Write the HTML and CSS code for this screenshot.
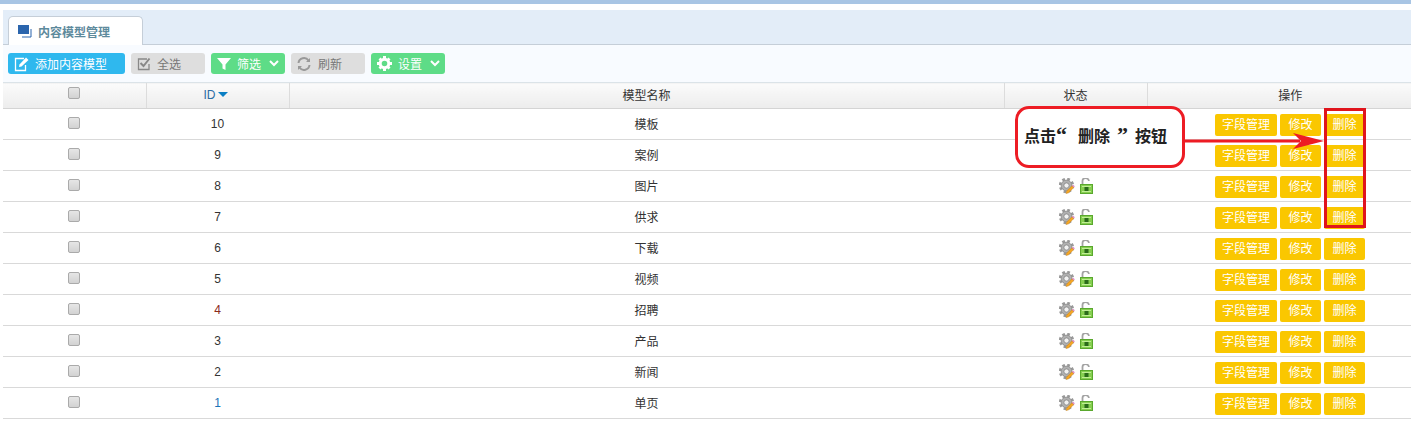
FILE: index.html
```html
<!DOCTYPE html>
<html lang="zh-CN">
<head>
    <meta charset="UTF-8">
    <title>内容模型管理</title>
    <link rel="stylesheet" href="styles.css">
</head>
<body>
    <svg class="defs" width="0" height="0">
        <symbol id="ico-status" viewBox="0 0 16 16">
            <circle cx="7.500" cy="7.500" r="6.500" fill="none" stroke="#999" stroke-width="2.400" stroke-dasharray="2.700 2.400"/>
            <circle cx="7.500" cy="7.500" r="5.400" fill="#b0b0b0" stroke="#7c7c7c" stroke-width=".7"/>
            <circle cx="7.500" cy="7.500" r="2.600" fill="#f1f1f1" stroke="#7c7c7c" stroke-width=".7"/>
            <path d="M7 15.500l.6-2.400L13 7.700l1.800 1.800-5.400 5.400z" fill="#f5a623" stroke="#b9740f" stroke-width=".4"/>
            <path d="M13 7.700l1-1 1.800 1.800-1 1z" fill="#e88fcb"/>
        </symbol>
        <symbol id="ico-lock" viewBox="0 0 13 16">
            <path d="M2.500 7V3.500a3.200 3.200 0 0 1 6.400-.5" fill="none" stroke="#a3a3a3" stroke-width="1.800"/>
            <rect x=".5" y="6.500" width="12" height="9" fill="#86cf50" stroke="#5aa82e"/>
            <rect x="2" y="8" width="9" height="1" fill="#c0ee95"/>
            <rect x="2" y="13" width="9" height="1" fill="#c0ee95"/>
            <rect x="4.500" y="9" width="4" height="4" fill="#2b6b1a"/>
        </symbol>
    </svg>

    <div class="topline"></div>

    <div class="page">
        <div class="tabbar">
            <div class="tab">
                <svg class="tab-icon" width="14" height="13" viewBox="0 0 14 13">
                    <rect x="0" y="0" width="11" height="9" fill="#2b65ad"/>
                    <path d="M13 4v8H4" fill="none" stroke="#2b65ad"/>
                </svg>
                内容模型管理
            </div>
        </div>

        <div class="toolbar">
            <a class="btn btn-blue btn-add">
                <svg width="16" height="16" viewBox="0 0 16 16" fill="none" stroke="#fff" stroke-width="1.300">
                    <path d="M10 2.500H1.500v12h10V9"/>
                    <path d="M5 11l.5-2.500L12 1.500l2.500 2.500-7 6.500z" fill="#fff" stroke="none"/>
                </svg>
                添加内容模型
            </a>
            <a class="btn btn-gray">
                <svg width="14" height="14" viewBox="0 0 14 14" fill="none" stroke="#888" stroke-width="1.300">
                    <path d="M10 2H1.500v10.500H12V7"/>
                    <path d="M3.500 6l3 3 6-7.500" stroke-width="2"/>
                </svg>
                全选
            </a>
            <a class="btn btn-green">
                <svg width="14" height="14" viewBox="0 0 14 14"><path d="M0 1h14L8.500 7.500V13l-3-1.500v-4z" fill="#fff"/></svg>
                筛选
                <svg class="caret" width="10" height="7" viewBox="0 0 10 7" fill="none" stroke="#fff" stroke-width="2"><path d="M1 1l4 4 4-4"/></svg>
            </a>
            <a class="btn btn-gray btn-refresh">
                <svg width="14" height="14" viewBox="0 0 14 14" fill="none" stroke="#999" stroke-width="2">
                    <path d="M1.500 6a5.500 5.500 0 0 1 10-2.500"/>
                    <path d="M12.500 8a5.500 5.500 0 0 1-10 2.500"/>
                    <path d="M13 1v4H9z" fill="#999" stroke="none"/>
                    <path d="M1 13V9h4z" fill="#999" stroke="none"/>
                </svg>
                刷新
            </a>
            <a class="btn btn-green">
                <svg width="15" height="15" viewBox="0 0 15 15">
                    <circle cx="7.500" cy="7.500" r="4.300" fill="none" stroke="#fff" stroke-width="3"/>
                    <path d="M6 0h3v3H6zM6 12h3v3H6zM0 6h3v3H0zM12 6h3v3h-3zM1.500 3.500l2-2 2 2-2 2zM9.500 11.500l2-2 2 2-2 2zM1.500 11.500l2-2 2 2-2 2zM9.500 3.500l2-2 2 2-2 2z" fill="#fff"/>
                </svg>
                设置
                <svg class="caret" width="10" height="7" viewBox="0 0 10 7" fill="none" stroke="#fff" stroke-width="2"><path d="M1 1l4 4 4-4"/></svg>
            </a>
        </div>

        <table class="grid">
            <colgroup>
                <col class="col-check"><col class="col-id"><col class="col-name"><col class="col-status"><col>
            </colgroup>
            <thead>
                <tr>
                    <th><span class="check"></span></th>
                    <th class="id-head">ID<i class="sort"></i></th>
                    <th>模型名称</th>
                    <th>状态</th>
                    <th class="ops-head">操作</th>
                </tr>
            </thead>
            <tbody>
                <tr><td><span class="check"></span></td><td class="id">10</td><td>模板</td><td class="status"><svg class="i-status"><use href="#ico-status"/></svg><svg class="i-lock"><use href="#ico-lock"/></svg></td><td class="ops"><a class="op">字段管理</a><a class="op">修改</a><a class="op">删除</a></td></tr>
                <tr><td><span class="check"></span></td><td class="id">9</td><td>案例</td><td class="status"><svg class="i-status"><use href="#ico-status"/></svg><svg class="i-lock"><use href="#ico-lock"/></svg></td><td class="ops"><a class="op">字段管理</a><a class="op">修改</a><a class="op">删除</a></td></tr>
                <tr><td><span class="check"></span></td><td class="id">8</td><td>图片</td><td class="status"><svg class="i-status"><use href="#ico-status"/></svg><svg class="i-lock"><use href="#ico-lock"/></svg></td><td class="ops"><a class="op">字段管理</a><a class="op">修改</a><a class="op">删除</a></td></tr>
                <tr><td><span class="check"></span></td><td class="id">7</td><td>供求</td><td class="status"><svg class="i-status"><use href="#ico-status"/></svg><svg class="i-lock"><use href="#ico-lock"/></svg></td><td class="ops"><a class="op">字段管理</a><a class="op">修改</a><a class="op">删除</a></td></tr>
                <tr><td><span class="check"></span></td><td class="id">6</td><td>下载</td><td class="status"><svg class="i-status"><use href="#ico-status"/></svg><svg class="i-lock"><use href="#ico-lock"/></svg></td><td class="ops"><a class="op">字段管理</a><a class="op">修改</a><a class="op">删除</a></td></tr>
                <tr><td><span class="check"></span></td><td class="id">5</td><td>视频</td><td class="status"><svg class="i-status"><use href="#ico-status"/></svg><svg class="i-lock"><use href="#ico-lock"/></svg></td><td class="ops"><a class="op">字段管理</a><a class="op">修改</a><a class="op">删除</a></td></tr>
                <tr><td><span class="check"></span></td><td class="id red">4</td><td>招聘</td><td class="status"><svg class="i-status"><use href="#ico-status"/></svg><svg class="i-lock"><use href="#ico-lock"/></svg></td><td class="ops"><a class="op">字段管理</a><a class="op">修改</a><a class="op">删除</a></td></tr>
                <tr><td><span class="check"></span></td><td class="id">3</td><td>产品</td><td class="status"><svg class="i-status"><use href="#ico-status"/></svg><svg class="i-lock"><use href="#ico-lock"/></svg></td><td class="ops"><a class="op">字段管理</a><a class="op">修改</a><a class="op">删除</a></td></tr>
                <tr><td><span class="check"></span></td><td class="id">2</td><td>新闻</td><td class="status"><svg class="i-status"><use href="#ico-status"/></svg><svg class="i-lock"><use href="#ico-lock"/></svg></td><td class="ops"><a class="op">字段管理</a><a class="op">修改</a><a class="op">删除</a></td></tr>
                <tr><td><span class="check"></span></td><td class="id blue">1</td><td>单页</td><td class="status"><svg class="i-status"><use href="#ico-status"/></svg><svg class="i-lock"><use href="#ico-lock"/></svg></td><td class="ops"><a class="op">字段管理</a><a class="op">修改</a><a class="op">删除</a></td></tr>
            </tbody>
        </table>
    </div>

    <!-- red annotation drawn over the screenshot -->
    <div class="callout">点击<span class="quote">“</span>删除<span class="quote quote-end">”</span>按钮</div>
    <svg class="arrow" width="139" height="20" viewBox="0 0 139 20">
        <path d="M0 10h115" stroke="#ed1c24" stroke-width="3"/>
        <path d="M108 2l31 8-31 8 8-8z" fill="#ed1c24"/>
    </svg>
    <div class="del-mark"></div>
</body>
</html>
```

FILE: styles.css
```css
/* General Reset */
* {
    margin: 0;
    padding: 0;
    box-sizing: border-box;
}

body {
    font-family: 'Liberation Sans', 'Noto Sans CJK SC', sans-serif;
    font-size: 12px;
    color: #333;
    background: #fff;
    height: 435px;
    overflow: hidden;
    position: relative;
}

.defs {
    position: absolute;
}

.topline {
    height: 4px;
    background: #a8c5e4;
}

.page {
    margin: 6px 0 0 3px;
}

/* Tab bar */
.tabbar {
    height: 35px;
    padding: 6px 0 0 5px;
    background: #e3edf8;
    border-bottom: 1px solid #c5ced8;
}

.tab {
    width: 135px;
    height: 29px;
    padding-left: 9px;
    display: flex;
    align-items: center;
    gap: 6px;
    font-size: 12px;
    font-weight: bold;
    color: #5d8a9c;
    background: #fff;
    border: 1px solid #c5ced8;
    border-bottom: none;
    border-radius: 5px 5px 0 0;
}

/* Toolbar */
.toolbar {
    height: 37px;
    padding: 8px 0 0 5px;
    display: flex;
    gap: 6px;
    background: #f8fbff;
}

.btn {
    height: 21px;
    width: 74px;
    padding-left: 6px;
    display: flex;
    align-items: center;
    gap: 6px;
    border-radius: 3px;
    font-size: 12px;
    color: #fff;
}

.btn-add {
    width: 117px;
    gap: 5px;
    background: #2fb8ee;
}

.btn-gray {
    background: #dedede;
    color: #777;
}

.btn-green {
    background: #5edc87;
}

.btn-refresh {
    gap: 7px;
}

.caret {
    margin-left: 2px;
}

/* Table */
.grid {
    width: 100%;
    table-layout: fixed;
    border-collapse: collapse;
}

.col-check,
.col-id {
    width: 143px;
}

.col-name {
    width: 715px;
}

.col-status {
    width: 143px;
}

.grid th {
    height: 26px;
    padding-bottom: 2px;
    font-weight: normal;
    font-size: 12px;
    color: #333;
    background: linear-gradient(to bottom, #fbfbfb, #ececec);
    border-top: 1px solid #dbe3e8;
    border-bottom: 1px solid #d4d4d4;
    border-left: 1px solid #dcdcdc;
}

.grid th:first-child {
    border-left: none;
}

.grid td {
    height: 31px;
    text-align: center;
    vertical-align: middle;
    border-bottom: 1px solid #d9d9d9;
}

/* CJK glyphs sit low in the line box */
.grid td:nth-child(3) {
    padding-bottom: 2px;
}

.grid th.id-head {
    padding-right: 4px;
    color: #2b6ca3;
}

.grid th.ops-head {
    padding-left: 22px;
}

.sort {
    display: inline-block;
    margin-left: 2px;
    vertical-align: 2px;
    border-left: 5px solid transparent;
    border-right: 5px solid transparent;
    border-top: 5px solid #0a7fc4;
}

.id.red {
    color: #8a2a1c;
}

.id.blue {
    color: #1a73b8;
}

.check {
    display: block;
    width: 12px;
    height: 12px;
    margin: 0 auto 3px 65px;
    background: linear-gradient(to bottom, #e6e6e6, #d2d2d2);
    border: 1px solid #aaa;
    border-radius: 2px;
}

.status svg {
    vertical-align: middle;
}

.i-status {
    width: 16px;
    height: 16px;
    margin-right: 5px;
    margin-left: 1px;
}

.i-lock {
    width: 13px;
    height: 16px;
}

.ops {
    padding: 2px 0 0 68px;
    text-align: left !important;
    white-space: nowrap;
}

.op {
    display: inline-block;
    height: 22px;
    line-height: 22px;
    width: 41px;
    margin-right: 3px;
    text-align: center;
    color: #fff;
    background: #fac700;
    border-radius: 2px;
}

.op:first-child {
    width: 62px;
}

/* Annotation */
.callout {
    position: absolute;
    left: 1015px;
    top: 106px;
    width: 170px;
    height: 62px;
    padding: 0 0 4px 6px;
    display: flex;
    align-items: center;
    font-family: 'Noto Sans CJK SC', serif;
    font-size: 16px;
    font-weight: bold;
    color: #222;
    background: #fff;
    border: 3px solid #ed1c24;
    border-radius: 14px;
}

.quote {
    width: 22px;
    font-family: 'Liberation Serif', serif;
    font-size: 22px;
}

.quote-end {
    width: 25px;
    text-align: center;
}

.arrow {
    position: absolute;
    left: 1185px;
    top: 131px;
}

.del-mark {
    position: absolute;
    left: 1324px;
    top: 108px;
    width: 42px;
    height: 120px;
    border: 3px solid #e0141c;
}
```
